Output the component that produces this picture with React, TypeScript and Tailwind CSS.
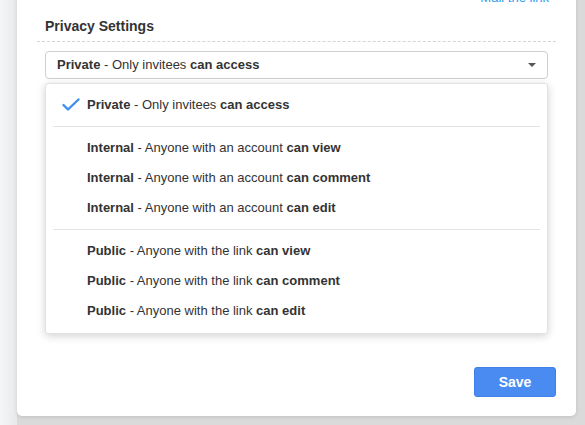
import { Fragment } from "react"

type Option = { id: string; level: string; who: string; perm: string }

const groups: Option[][] = [
  [{ id: "private", level: "Private", who: "Only invitees", perm: "can access" }],
  [
    { id: "int-view", level: "Internal", who: "Anyone with an account", perm: "can view" },
    { id: "int-comment", level: "Internal", who: "Anyone with an account", perm: "can comment" },
    { id: "int-edit", level: "Internal", who: "Anyone with an account", perm: "can edit" },
  ],
  [
    { id: "pub-view", level: "Public", who: "Anyone with the link", perm: "can view" },
    { id: "pub-comment", level: "Public", who: "Anyone with the link", perm: "can comment" },
    { id: "pub-edit", level: "Public", who: "Anyone with the link", perm: "can edit" },
  ],
]

const selected = "private"

function Label({ o }: { o: Option }) {
  return (
    <span className="whitespace-nowrap">
      <b className="font-bold">{o.level}</b> - {o.who} <b className="font-bold">{o.perm}</b>
    </span>
  )
}

export default function App() {
  const current = groups[0][0]

  return (
    <div
      className="flex w-[585px] h-[425px] overflow-hidden bg-[#f4f5f6] text-[13px] text-[#333]"
      style={{ fontFamily: '"Liberation Sans", Arial, sans-serif' }}
    >
      {/* left page strip */}
      <div className="w-[17px] shrink-0 bg-gradient-to-r from-[#f5f6f7] to-[#e8e9ea]" />

      <div className="flex-1 flex bg-[#dadada] pr-[9px] pb-[9px]">
        {/* card */}
        <div className="-mt-[10px] h-[426px] flex-1 flex flex-col bg-white rounded-b-[5px] shadow-[0_1px_4px_rgba(0,0,0,0.12)] px-[28px]">
          <div className="flex justify-end h-[16px] leading-[16px] -mr-[1px]">
            <a className="text-[#2b9cf2]">Mail the link</a>
          </div>

          <h3 className="mt-[10px] h-[20px] leading-[20px] text-[14px] font-bold text-[#333]">Privacy Settings</h3>
          <div className="mt-[5px] -mx-[8px] border-t border-dashed border-[#d4d4d4]" />

          {/* select */}
          <div className="relative mt-[9px]">
            <div className="h-[28px] flex items-center justify-between rounded-[4px] border border-[#cfcfcf] bg-white pl-[11px] pr-[11px]">
              <Label o={current} />
              <span className="w-0 h-0 border-l-[4px] border-r-[4px] border-t-[4px] border-l-transparent border-r-transparent border-t-[#555]" />
            </div>

            {/* open menu */}
            <div className="absolute left-0 right-0 top-[32px] z-10 rounded-[3px] border border-[#e2e2e2] bg-white pt-[6px] pb-[7px] shadow-[0_2px_8px_rgba(0,0,0,0.18)]">
              {groups.map((g, gi) => (
                <Fragment key={gi}>
                  {gi > 0 && <div className="mx-[7px] my-[6px] h-px bg-[#e3e3e3]" />}
                  {g.map(o => (
                    <div key={o.id} className="h-[30px] flex items-center">
                      <span className="w-[41px] shrink-0 flex pl-[16px]">
                        {o.id === selected && (
                          <svg width="18" height="14" viewBox="0 0 18 14" fill="none">
                            <polyline points="1.5,7 6,11.5 16.5,1.5" stroke="#3d8ff0" strokeWidth="2.4" strokeLinecap="round" strokeLinejoin="round" />
                          </svg>
                        )}
                      </span>
                      <Label o={o} />
                    </div>
                  ))}
                </Fragment>
              ))}
            </div>
          </div>

          <div className="flex-1" />

          {/* footer */}
          <div className="flex justify-end -mr-[8px] pb-[19px]">
            <button className="w-[82px] h-[30px] rounded-[3px] border border-[#3f7fe6] bg-[#4a8bf2] text-white text-[14px] font-bold">
              Save
            </button>
          </div>
        </div>
      </div>
    </div>
  )
}
